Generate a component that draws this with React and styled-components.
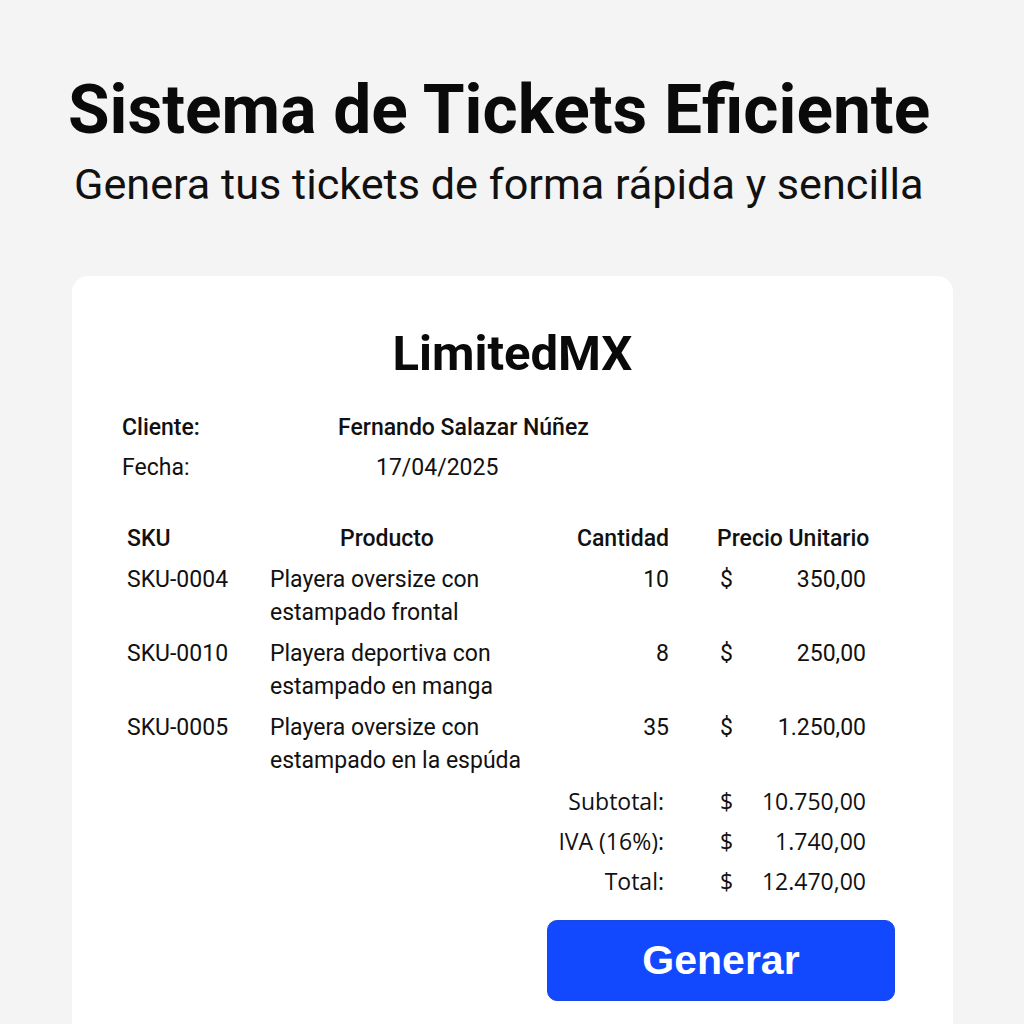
import React from "react";
import styled, { createGlobalStyle } from "styled-components";

const Global = createGlobalStyle`
  html, body { margin: 0; padding: 0; }
  body {
    background: #f4f4f4;
    font-family: Roboto, "Liberation Sans", sans-serif;
    color: #111;
  }
`;

const Page = styled.div`
  width: 1024px;
  height: 1024px;
  overflow: hidden;
  display: flex;
  flex-direction: column;
`;

const Header = styled.header`
  padding: 72px 0 0 68px;
  display: flex;
  flex-direction: column;
`;

const Title = styled.h1`
  margin: 0;
  font-family: Roboto, "Liberation Sans", sans-serif;
  font-weight: 700;
  font-size: 67.6px;
  line-height: 76px;
  color: #0a0a0a;
`;

const Subtitle = styled.p`
  margin: 13px 0 0 6px;
  font-family: Roboto, "Liberation Sans", sans-serif;
  font-weight: 400;
  font-size: 43.2px;
  line-height: 48px;
  color: #111;
`;

const Card = styled.section`
  margin: 67px 0 0 72px;
  width: 881px;
  flex: 1;
  background: #fff;
  border-radius: 16px 16px 0 0;
  padding: 50px 50px 0 50px;
  box-sizing: border-box;
  display: flex;
  flex-direction: column;
`;

const Brand = styled.h2`
  margin: 0;
  text-align: center;
  font-weight: 700;
  font-size: 49px;
  line-height: 56px;
  color: #0a0a0a;
`;

const InfoGrid = styled.div`
  margin-top: 30px;
  display: grid;
  grid-template-columns: 216px 1fr;
  row-gap: 8px;
  font-size: 23px;
  line-height: 32px;
`;

const InfoLabel = styled.div`
  font-weight: ${(p) => (p.$strong ? 500 : 400)};
`;

const InfoValue = styled.div`
  font-weight: ${(p) => (p.$strong ? 500 : 400)};
  padding-left: ${(p) => p.$indent || 0}px;
`;

const Table = styled.div`
  margin-top: 38px;
  margin-left: 5px;
  display: grid;
  grid-template-columns: 143px 280px 119px 64px 133px;
  font-size: 23px;
  line-height: 33px;
`;

const HeadCell = styled.div`
  font-weight: 500;
  text-align: ${(p) => p.$align || "left"};
  padding-left: ${(p) => p.$pl || 0}px;
  grid-column: ${(p) => p.$span || "auto"};
  margin-bottom: 8px;
  white-space: nowrap;
`;

const Cell = styled.div`
  text-align: ${(p) => p.$align || "left"};
  padding-left: ${(p) => p.$pl || 0}px;
  padding-right: ${(p) => p.$pr || 0}px;
  margin-bottom: 8px;
  white-space: ${(p) => (p.$wrap ? "normal" : "nowrap")};
`;

const Totals = styled.div`
  display: grid;
  grid-template-columns: 542px 64px 133px;
  font-family: "Open Sans", Roboto, sans-serif;
  font-size: 23px;
  line-height: 40px;
  margin-left: 5px;
  margin-top: -4px;
`;

const TotalLabel = styled.div`
  text-align: right;
  padding-right: 5px;
`;

const Dollar = styled.div`
  padding-left: 51px;
`;

const Amount = styled.div`
  text-align: right;
`;

const Actions = styled.div`
  display: flex;
  justify-content: flex-end;
  padding-right: 8px;
  margin-top: 19px;
`;

const Button = styled.button`
  width: 348px;
  height: 81px;
  border: 1px solid #1a46e8;
  border-radius: 10px;
  background: #1249ff;
  color: #fff;
  font-family: "Liberation Sans", Arial, sans-serif;
  font-weight: 700;
  font-size: 41px;
  cursor: pointer;
`;

const items = [
  { sku: "SKU-0004", name: "Playera oversize con estampado frontal", qty: 10, price: "350,00" },
  { sku: "SKU-0010", name: "Playera deportiva con estampado en manga", qty: 8, price: "250,00" },
  { sku: "SKU-0005", name: "Playera oversize con estampado en la espúda", qty: 35, price: "1.250,00" },
];

const totals = [
  { label: "Subtotal:", value: "10.750,00" },
  { label: "IVA (16%):", value: "1.740,00" },
  { label: "Total:", value: "12.470,00" },
];

export default function App() {
  return (
    <Page>
      <Global />
      <Header>
        <Title>Sistema de Tickets Eficiente</Title>
        <Subtitle>Genera tus tickets de forma rápida y sencilla</Subtitle>
      </Header>
      <Card>
        <Brand>LimitedMX</Brand>
        <InfoGrid>
          <InfoLabel $strong>Cliente:</InfoLabel>
          <InfoValue $strong>Fernando Salazar Núñez</InfoValue>
          <InfoLabel>Fecha:</InfoLabel>
          <InfoValue $indent={38}>17/04/2025</InfoValue>
        </InfoGrid>
        <Table>
          <HeadCell>SKU</HeadCell>
          <HeadCell $pl={70}>Producto</HeadCell>
          <HeadCell $align="right">Cantidad</HeadCell>
          <HeadCell $span="4 / 6" $pl={48}>Precio Unitario</HeadCell>
          {items.map((it) => (
            <React.Fragment key={it.sku}>
              <Cell>{it.sku}</Cell>
              <Cell $wrap $pr={12}>{it.name}</Cell>
              <Cell $align="right">{it.qty}</Cell>
              <Cell $pl={51}>$</Cell>
              <Cell $align="right">{it.price}</Cell>
            </React.Fragment>
          ))}
        </Table>
        <Totals>
          {totals.map((t) => (
            <React.Fragment key={t.label}>
              <TotalLabel>{t.label}</TotalLabel>
              <Dollar>$</Dollar>
              <Amount>{t.value}</Amount>
            </React.Fragment>
          ))}
        </Totals>
        <Actions>
          <Button>Generar</Button>
        </Actions>
      </Card>
    </Page>
  );
}
